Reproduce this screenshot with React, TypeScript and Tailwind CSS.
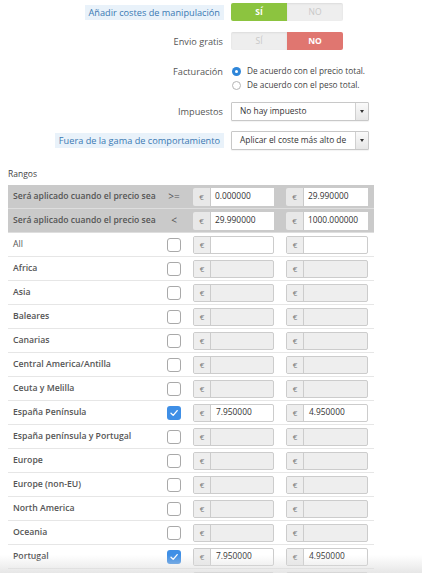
import React from "react";

type Fila = { nombre: string; activo?: boolean; desde?: string; hasta?: string; normal?: boolean };

const filas: Fila[] = [
  { nombre: "All", normal: true },
  { nombre: "Africa" },
  { nombre: "Asia" },
  { nombre: "Baleares" },
  { nombre: "Canarias" },
  { nombre: "Central America/Antilla" },
  { nombre: "Ceuta y Melilla" },
  { nombre: "España Península", activo: true, desde: "7.950000", hasta: "4.950000" },
  { nombre: "España península y Portugal" },
  { nombre: "Europe" },
  { nombre: "Europe (non-EU)" },
  { nombre: "North America" },
  { nombre: "Oceania" },
  { nombre: "Portugal", activo: true, desde: "7.950000", hasta: "4.950000" },
  { nombre: "Rest of the World" },
];

function Label({ text, destacado }: { text: string; destacado?: boolean }) {
  return (
    <div className="w-[224px] flex justify-end shrink-0">
      <span
        className={
          destacado
            ? "bg-[#e9f2fa] text-[#3a79b3] px-[4px] py-[1px] leading-[13px]"
            : "text-[#555] px-[1px] leading-[13px]"
        }
      >
        {text}
      </span>
    </div>
  );
}

function Toggle({ si }: { si: boolean }) {
  return (
    <div className="flex w-[112px] h-[18px] rounded-[2px] overflow-hidden text-[8.5px] font-bold">
      <div
        className={
          si
            ? "flex-1 flex items-center justify-center bg-[#8cc43f] text-white"
            : "flex-1 flex items-center justify-center bg-[#eeeeee] text-[#c8c8c8] font-normal shadow-[inset_0_1px_2px_rgba(0,0,0,0.08)]"
        }
      >
        SÍ
      </div>
      <div
        className={
          !si
            ? "flex-1 flex items-center justify-center bg-[#e07670] text-white"
            : "flex-1 flex items-center justify-center bg-[#eeeeee] text-[#c8c8c8] font-normal shadow-[inset_0_1px_2px_rgba(0,0,0,0.08)]"
        }
      >
        NO
      </div>
    </div>
  );
}

function Radio({ on, text }: { on?: boolean; text: string }) {
  return (
    <div className="flex items-center gap-[6px] h-[14px]">
      {on ? (
        <span className="w-[9px] h-[9px] rounded-full bg-[#2f86d9] flex items-center justify-center">
          <span className="w-[3px] h-[3px] rounded-full bg-white" />
        </span>
      ) : (
        <span className="w-[9px] h-[9px] rounded-full border border-[#b5b5b5] bg-white" />
      )}
      <span className="text-[#444] text-[8.3px]">{text}</span>
    </div>
  );
}

function Select({ value }: { value: string }) {
  return (
    <div className="flex w-[138px] h-[19px] border border-[#c8c8c8] rounded-[1px] bg-white shadow-[0_1px_1px_rgba(0,0,0,0.05)]">
      <div className="flex-1 flex items-center pl-[8px] text-[#333] text-[8.4px] overflow-hidden whitespace-nowrap">{value}</div>
      <div className="w-[13px] border-l border-[#d0d0d0] bg-gradient-to-b from-[#fafafa] to-[#e6e6e6] flex items-center justify-center">
        <span className="w-0 h-0 border-l-[2.5px] border-r-[2.5px] border-t-[3px] border-l-transparent border-r-transparent border-t-[#333]" />
      </div>
    </div>
  );
}

function Euro({ value, disabled }: { value?: string; disabled?: boolean }) {
  return (
    <div
      className={
        "flex h-[18px] border border-[#cccccc] rounded-[2px] overflow-hidden " +
        (disabled ? "bg-[#eeeeee]" : "bg-white")
      }
    >
      <div className="w-[17px] shrink-0 bg-[#eeeeee] border-r border-[#cccccc] flex items-center justify-center text-[#777] text-[8px]">
        €
      </div>
      <div className="flex-1 flex items-center pl-[5px] text-[#333] text-[8.4px]">{value}</div>
    </div>
  );
}

function Check({ on }: { on?: boolean }) {
  return on ? (
    <span className="w-[14px] h-[14px] rounded-[3px] bg-[#3f8fe6] flex items-center justify-center">
      <svg width="10" height="10" viewBox="0 0 10 10">
        <path d="M2 5.2 L4.2 7.4 L8.2 2.6" fill="none" stroke="white" strokeWidth="1.3" strokeLinecap="round" strokeLinejoin="round" />
      </svg>
    </span>
  ) : (
    <span className="w-[14px] h-[14px] rounded-[3px] border border-[#a9a9a9] bg-white" />
  );
}

export default function App() {
  return (
    <div className="relative w-[422px] min-h-[573px] bg-white text-[9.2px] overflow-hidden" style={{ fontFamily: "'Open Sans', sans-serif" }}>
      <div className="flex flex-col pt-[3px]">
        <div className="flex items-center gap-[7px] h-[18px]">
          <Label text="Añadir costes de manipulación" destacado />
          <Toggle si />
        </div>
        <div className="flex items-center gap-[7px] h-[18px] mt-[11px]">
          <Label text="Envio gratis" />
          <Toggle si={false} />
        </div>
        <div className="flex gap-[7px] mt-[14px]">
          <div className="w-[224px] flex justify-end pt-[1px]">
            <span className="text-[#555] px-[1px] leading-[13px]">Facturación</span>
          </div>
          <div className="flex flex-col pl-[1px]">
            <Radio on text="De acuerdo con el precio total." />
            <Radio text="De acuerdo con el peso total." />
          </div>
        </div>
        <div className="flex items-center gap-[7px] mt-[10px]">
          <Label text="Impuestos" />
          <Select value="No hay impuesto" />
        </div>
        <div className="flex items-center gap-[7px] mt-[10px]">
          <Label text="Fuera de la gama de comportamiento" destacado />
          <Select value="Aplicar el coste más alto de" />
        </div>
      </div>

      <div className="px-[8px] mt-[17px] text-[#444] text-[8.5px] leading-[13px]">Rangos</div>

      <div className="mx-[8px] mt-[5px] w-[366px]">
        {[
          { op: ">=", a: "0.000000", b: "29.990000" },
          { op: "<", a: "29.990000", b: "1000.000000" },
        ].map((h) => (
          <div key={h.op} className="flex items-center h-[24px] bg-[#cacaca] border-b border-[#dedede]">
            <div className="w-[152px] pl-[5px] font-semibold text-[#555] text-[8.6px] whitespace-nowrap">Será aplicado cuando el precio sea</div>
            <div className="w-[28px] flex justify-center text-[#555] text-[10px]">{h.op}</div>
            <div className="w-[81px] ml-[5px]">
              <div className="flex h-[18px] gap-[1px]">
                <div className="w-[17px] bg-[#e8e8e8] flex items-center justify-center text-[#777] text-[8px] rounded-l-[2px]">€</div>
                <div className="flex-1 bg-white flex items-center pl-[4px] text-[#333] text-[8.4px]">{h.a}</div>
              </div>
            </div>
            <div className="w-[82px] ml-[12px]">
              <div className="flex h-[18px] gap-[1px]">
                <div className="w-[17px] bg-[#e8e8e8] flex items-center justify-center text-[#777] text-[8px] rounded-l-[2px]">€</div>
                <div className="flex-1 bg-white flex items-center pl-[4px] text-[#333] text-[8.4px]">{h.b}</div>
              </div>
            </div>
          </div>
        ))}
        {filas.map((f) => (
          <div key={f.nombre} className="flex items-center h-[24px] border-b border-[#e6e6e6]">
            <div
              className={
                "w-[152px] pl-[5px] whitespace-nowrap text-[#555] text-[8.7px] " +
                (f.normal ? "font-normal" : "font-semibold")
              }
            >
              {f.nombre}
            </div>
            <div className="w-[28px] flex justify-center">
              <Check on={f.activo} />
            </div>
            <div className="w-[81px] ml-[5px]">
              <Euro value={f.desde} disabled={!f.activo && !f.normal} />
            </div>
            <div className="w-[82px] ml-[12px]">
              <Euro value={f.hasta} disabled={!f.activo && !f.normal} />
            </div>
          </div>
        ))}
      </div>

      <div className="pointer-events-none absolute left-0 right-0 top-[555px] h-[18px] bg-gradient-to-b from-transparent to-[#dcdcdc]/70" />
    </div>
  );
}
